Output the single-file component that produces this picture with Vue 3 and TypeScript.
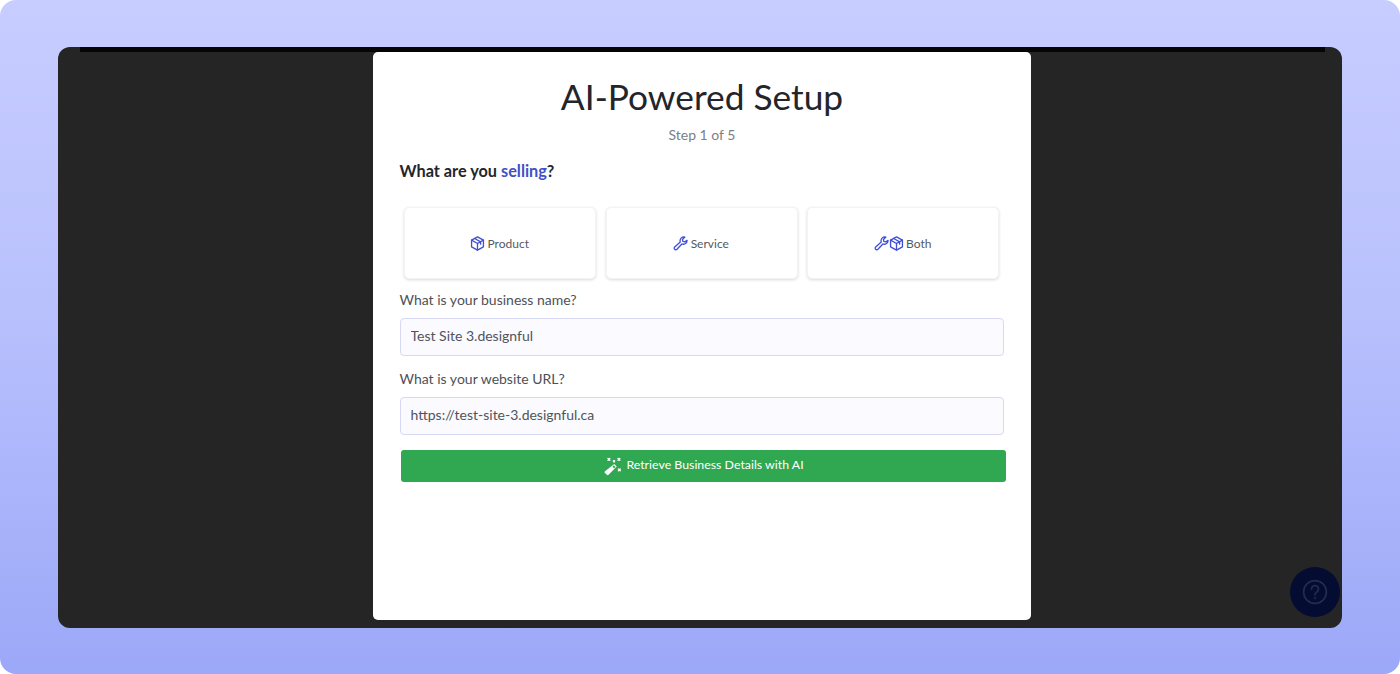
<script setup lang="ts">
interface Choice { label: string; icons: string[] }
const choices: Choice[] = [
  { label: 'Product', icons: ['box'] },
  { label: 'Service', icons: ['wrench'] },
  { label: 'Both', icons: ['wrench', 'box'] },
]
</script>

<template>
  <div class="page">
    <div class="window">
      <div class="topbar"></div>
      <main class="card">
        <h1>AI-Powered Setup</h1>
        <p class="step">Step 1 of 5</p>
        <h2>What are you <span>selling</span>?</h2>
        <div class="choices">
          <button v-for="c in choices" :key="c.label" class="choice">
            <span class="icons">
              <template v-for="(ic, i) in c.icons" :key="i">
                <svg v-if="ic === 'box'" class="ico" viewBox="0 0 24 24" fill="none" stroke="currentColor" stroke-width="2.100" stroke-linejoin="round" stroke-linecap="round">
                  <path d="M12 1.500l9.500 5.200v10.600L12 22.500l-9.500-5.200V6.700z" />
                  <path d="M2.500 6.700L12 12l9.500-5.300M12 12v10.500M7.500 4l9.500 5.400v3.600" />
                </svg>
                <svg v-else class="ico" viewBox="0 0 24 24" fill="none" stroke="currentColor" stroke-width="2.100" stroke-linejoin="round" stroke-linecap="round">
                  <path d="M22.500 7a6.200 6.200 0 0 1-8.300 5.800L6.300 21.200a2.600 2.600 0 0 1-3.700 0 2.600 2.600 0 0 1 .1-3.700l8.900-7.900A6.200 6.200 0 0 1 19 1.700l-3.900 3.800.6 3.200 3.200.6L22.500 7z" />
                </svg>
              </template>
            </span>
            <span>{{ c.label }}</span>
          </button>
        </div>
        <label class="field">
          <span>What is your business name?</span>
          <input type="text" value="Test Site 3.designful" />
        </label>
        <label class="field url">
          <span>What is your website URL?</span>
          <input type="text" value="https://test-site-3.designful.ca" />
        </label>
        <button class="retrieve">
          <svg class="wand" viewBox="0 0 24 24">
            <path fill="currentColor" d="M13.500 9.500l3 3-9.800 10a1.500 1.500 0 0 1-2.100 0l-2.200-2a1.500 1.500 0 0 1 0-2.200z" />
            <path fill="#30a751" d="M11.300 12.800l1.700-1.700 2 2-1.700 1.700z" />
            <path fill="none" stroke="currentColor" stroke-width="1.600" stroke-linecap="round" d="M6 3l2.200 2.200M8.200 3L6 5.200M18 3l2.200 2.200M20.200 3L18 5.200M18.500 15.500l2.200 2.200M20.700 15.500l-2.200 2.200M12.500 5.500l1.400 1.400M13.900 5.500l-1.400 1.400" />
          </svg>
          <span>Retrieve Business Details with AI</span>
        </button>
      </main>
      <div class="help">
        <svg viewBox="0 0 24 24" fill="none" stroke="currentColor" stroke-width="1.6" stroke-linecap="round">
          <circle cx="12" cy="12" r="10.500" />
          <path d="M8.800 9.300a3.200 3.200 0 1 1 4.900 2.700c-1 .7-1.700 1.300-1.700 2.600" />
          <path d="M12 17.600v.2" stroke-width="2" />
        </svg>
      </div>
    </div>
  </div>
</template>

<style>
html, body { margin: 0; background: #fff; }
</style>

<style scoped>
.page {
  box-sizing: border-box;
  width: 1400px;
  height: 674px;
  padding: 47px 58px 46px;
  background: linear-gradient(180deg, #c7cdff 0%, #b9c1fd 45%, #9ca8f8 100%);
  border-radius: 16px;
  overflow: hidden;
  font-family: Lato, "Open Sans", sans-serif;
}
.window {
  position: relative;
  height: 581px;
  background: #252525;
  border-radius: 12px;
}
.topbar {
  height: 5px;
  margin: 0 17px 0 22px;
  background: #050506;
}
.card {
  box-sizing: border-box;
  width: 658.500px;
  height: 568px;
  margin-left: 314.500px;
  padding: 24px 27px 0 27.500px;
  background: #fff;
  border-radius: 5px;
  display: flex;
  flex-direction: column;
  align-items: flex-start;
}
h1 {
  align-self: stretch;
  margin: 0;
  height: 42px;
  line-height: 42px;
  text-align: center;
  font-size: 35.300px;
  font-weight: 400;
  color: #23252b;
}
.step {
  align-self: stretch;
  margin: 9px 0 0;
  height: 17px;
  line-height: 16px;
  text-align: center;
  font-size: 14px;
  color: #7a7f85;
}
h2 {
  margin: 16px 0 0 -.5px;
  height: 20px;
  line-height: 21px;
  font-size: 16.300px;
  font-weight: 700;
  color: #23262c;
}
h2 span { color: #3f51c8; }
.choices {
  display: flex;
  gap: 9.500px;
  margin: 27px 0 0 4px;
}
.choice {
  display: flex;
  align-items: center;
  justify-content: center;
  gap: 2.500px;
  width: 192px;
  height: 72px;
  padding: 0;
  border: 1px solid #f3f3f4;
  border-radius: 5px;
  background: #fff;
  box-shadow: 0 1px 3px rgba(30, 30, 50, .16);
  font: 12px Lato, "Open Sans", sans-serif;
  color: #55595f;
}
.icons { display: flex; align-items: center; margin-left: -1px; }
.ico { width: 15px; height: 15px; color: #3f4fd8; }
.field {
  display: flex;
  flex-direction: column;
  margin-top: 13px;
  font-size: 14px;
  color: #4d5157;
}
.field span { height: 17px; line-height: 15px; margin-left: -.5px; }
.field.url { margin-top: 15px; }
.field input {
  box-sizing: border-box;
  width: 604px;
  height: 38px;
  margin-top: 9px;
  padding: 0 0 3px 9.500px;
  border: 1px solid #d6d8f5;
  border-radius: 4px;
  background: #fafaff;
  font: 14px Lato, "Open Sans", sans-serif;
  color: #50545a;
  outline: none;
}
.retrieve {
  display: flex;
  align-items: center;
  justify-content: center;
  gap: 3px;
  width: 605px;
  height: 32px;
  margin: 15px 0 0 1px;
  padding: 0;
  border: 0;
  border-radius: 3px;
  background: #30a751;
  color: #fff;
  font: 12.350px Lato, "Open Sans", sans-serif;
}
.retrieve span { position: relative; top: -2px; }
.wand { width: 20px; height: 20px; }
.help {
  position: absolute;
  right: 2px;
  bottom: 11px;
  width: 50px;
  height: 50px;
  border-radius: 50%;
  background: #040c32;
  color: #232b4e;
  display: flex;
  align-items: center;
  justify-content: center;
}
.help svg { width: 26px; height: 26px; }
</style>
